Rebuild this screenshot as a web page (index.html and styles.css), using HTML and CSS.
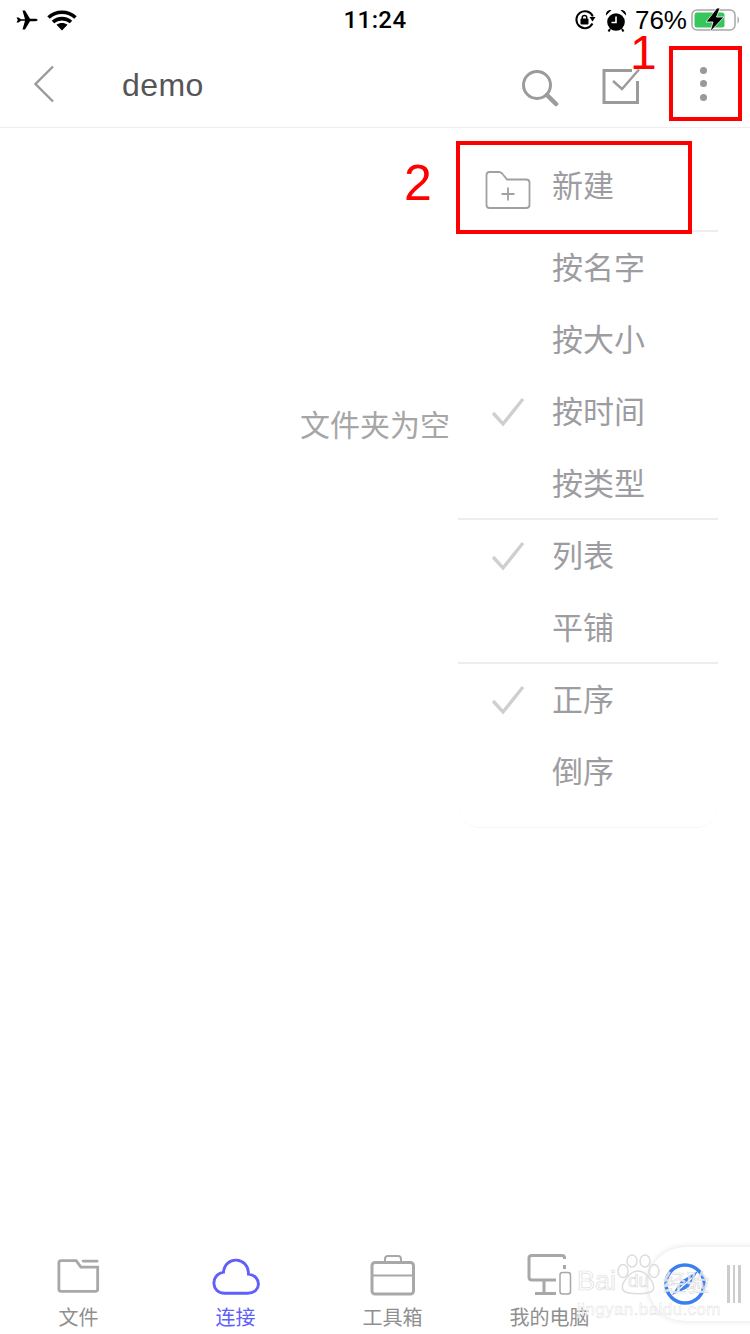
FILE: index.html
```html
<!DOCTYPE html>
<html lang="zh-CN">
	<head>
		<meta charset="UTF-8">
		<title>demo</title>
		<link rel="stylesheet" href="styles.css">
	</head>
	<body>
		<div class="page">
			<div class="status">
				<div class="status-left">
					<svg width="22" height="20" viewBox="0 0 22 20"><path d="M0.500 7.500 2.500 7.500 5 9.200 9 9.200 6.500 0.500 9 0.500 14 8.800 19 8.800C22.500 8.800 22.500 11.200 19 11.200L14 11.200 9 19.500 6.500 19.500 9 10.800 5 10.800 2.500 12.500 0.500 12.500 1.800 10Z" fill="#000"/></svg>
					<svg width="30" height="21" viewBox="0 0 30 21"><path d="M1.500 7.500C9 0.500 21 0.500 28.500 7.500M6 12C11 7.500 19 7.500 24 12" fill="none" stroke="#000" stroke-width="3.600"/><path d="M9.500 14.800C12.500 12.300 17.500 12.300 20.500 14.800L15 20.500Z" fill="#000"/></svg>
				</div>
				<div class="status-time">11:24</div>
				<div class="status-right">
					<svg class="ic-lock" width="22" height="22" viewBox="0 0 22 22"><path d="M18.500 14.500A8.500 8.500 0 1 1 18.800 7.500" fill="none" stroke="#000" stroke-width="2"/><path d="M15.500 8 21.500 8 18.500 12.500Z" fill="#000"/><rect x="6.500" y="9.500" width="8" height="6" rx="1" fill="#000"/><path d="M8.300 10V8.300C8.300 5.800 12.700 5.800 12.700 8.300V10" fill="none" stroke="#000" stroke-width="1.500"/></svg>
					<svg class="ic-alarm" width="22" height="23" viewBox="0 0 22 23"><circle cx="11" cy="13" r="8.800" fill="#000"/><path d="M11 7.500V13.500H6.500" fill="none" stroke="#fff" stroke-width="1.600"/><path d="M1 6.500C0.500 3 3 0.500 6.500 1ZM21 6.500C21.500 3 19 0.500 15.500 1Z" fill="#000"/><path d="M5 20 3.500 22.500M17 20 18.500 22.500" stroke="#000" stroke-width="2"/></svg>
					<span class="status-pct">76%</span>
					<svg width="50" height="24" viewBox="0 0 50 24"><rect x="1" y="2" width="43" height="20" rx="5" fill="none" stroke="#a8a8a8" stroke-width="1.500"/><rect x="3.500" y="4.500" width="30" height="15" rx="2.500" fill="#36c75a"/><path d="M46.500 8.500C48.500 9 48.500 15 46.500 15.500Z" fill="#a8a8a8"/><path d="M26 0 15 14 22 14 19 24 33 9 25.500 9 29 0Z" fill="#000" stroke="#fff" stroke-width="0.800"/></svg>
				</div>
			</div>

			<div class="nav">
				<svg class="nav-back" width="22" height="38" viewBox="0 0 22 38"><path d="M20 1.500 2.500 19 20 36.500" fill="none" stroke="#999" stroke-width="2.400"/></svg>
				<div class="nav-title">demo</div>
				<svg class="nav-search" width="38" height="38" viewBox="0 0 38 38"><circle cx="16" cy="16" r="13.500" fill="none" stroke="#9b9b9b" stroke-width="3"/><path d="M26 26 35 35" stroke="#9b9b9b" stroke-width="4.500" stroke-linecap="round"/></svg>
				<svg class="nav-check" width="40" height="38" viewBox="0 0 40 38"><path d="M30 3.500H2V35.500H35.500V14" fill="none" stroke="#9b9b9b" stroke-width="3"/><path d="M11 14 20 22 37 2.500" fill="none" stroke="#9b9b9b" stroke-width="2.400"/></svg>
				<div class="nav-more"><i></i><i></i><i></i></div>
			</div>

			<div class="main">文件夹为空</div>

			<div class="tabs">
				<div class="tab">
					<svg class="tab-folder" width="43" height="36" viewBox="0 0 46 38"><path d="M2 28V5C2 3.500 3 2.500 4.500 2.500H20.500L25.500 9.500H43.500V33C43.500 34.500 42.500 35.500 41 35.500H4.500C3 35.500 2 34.500 2 33Z" fill="none" stroke="#a8a8a8" stroke-width="3"/><path d="M28 3H43" stroke="#a8a8a8" stroke-width="3" stroke-linecap="round"/></svg>
					<span>文件</span>
				</div>
				<div class="tab tab-on">
					<svg width="48" height="39" viewBox="0 0 50 40"><path d="M13 37.500H37C52 37.500 52 19 38 17.500C38 -1.500 13 -1.500 12 15.500C-2 18 -1 37.500 13 37.500Z" fill="none" stroke="#5f5ffb" stroke-width="3"/></svg>
					<span>连接</span>
				</div>
				<div class="tab">
					<svg width="46" height="42" viewBox="0 0 46 42"><rect x="2" y="8.500" width="41.500" height="31.500" rx="3" fill="none" stroke="#a8a8a8" stroke-width="3"/><path d="M2 21.500H43.500" stroke="#a8a8a8" stroke-width="2"/><path d="M15 8V5C15 3 16 2 18 2H28C30 2 31 3 31 5V8" fill="none" stroke="#a8a8a8" stroke-width="2"/></svg>
					<span>工具箱</span>
				</div>
				<div class="tab">
					<svg width="46" height="42" viewBox="0 0 46 42"><path d="M29 26H5C3 26 2 25 2 23V4C2 2 3 1.500 5 1.500H35C36.500 1.500 37.500 2.500 37.500 4V5" fill="none" stroke="#a8a8a8" stroke-width="3"/><path d="M17 27V39M8 39.500H29" stroke="#a8a8a8" stroke-width="3"/><rect x="33" y="18.500" width="10.500" height="21.500" rx="2.500" fill="none" stroke="#a8a8a8" stroke-width="1.500"/><path d="M37.500 11V15" stroke="#a8a8a8" stroke-width="3"/></svg>
					<span>我的电脑</span>
				</div>
			</div>

			<div class="menu">
				<div class="menu-group">
					<div class="menu-row menu-row-new">
						<svg class="menu-icon" width="46" height="40" viewBox="0 0 46 40"><path d="M1.500 5C1.500 3 2.500 2 4.500 2H14C16 2 17 3 18 4.500L22 9.500H41C43 9.500 44.500 10.500 44.500 12.500V35C44.500 37 43 38 41 38H4.500C2.500 38 1.500 37 1.500 35Z" fill="none" stroke="#a0a0a4" stroke-width="1.800"/><path d="M16.500 24H29.500M23 17.500V30.500" stroke="#a0a0a4" stroke-width="1.800"/></svg>
						<span>新建</span>
					</div>
				</div>
				<div class="menu-group">
					<div class="menu-row"><span>按名字</span></div>
					<div class="menu-row"><span>按大小</span></div>
					<div class="menu-row">
						<svg class="menu-tick" width="34" height="30" viewBox="0 0 34 30"><path d="M2 16 12 27 32 2" fill="none" stroke="#cfcfcf" stroke-width="3.400"/></svg>
						<span>按时间</span>
					</div>
					<div class="menu-row"><span>按类型</span></div>
				</div>
				<div class="menu-group">
					<div class="menu-row">
						<svg class="menu-tick" width="34" height="30" viewBox="0 0 34 30"><path d="M2 16 12 27 32 2" fill="none" stroke="#cfcfcf" stroke-width="3.400"/></svg>
						<span>列表</span>
					</div>
					<div class="menu-row"><span>平铺</span></div>
				</div>
				<div class="menu-group">
					<div class="menu-row">
						<svg class="menu-tick" width="34" height="30" viewBox="0 0 34 30"><path d="M2 16 12 27 32 2" fill="none" stroke="#cfcfcf" stroke-width="3.400"/></svg>
						<span>正序</span>
					</div>
					<div class="menu-row"><span>倒序</span></div>
				</div>
			</div>

			<!-- annotations drawn on the screenshot -->
			<div class="mark mark-more"></div>
			<div class="mark mark-new"></div>
			<div class="mark-num mark-num-1">1</div>
			<div class="mark-num mark-num-2">2</div>

			<!-- floating pill + watermark -->
			<div class="pill">
				<svg width="44" height="44" viewBox="0 0 44 44"><circle cx="22" cy="22" r="19" fill="none" stroke="#3a7ff0" stroke-width="3.500"/><path d="M35 9 25 26 9 33 18 19Z" fill="#3a7ff0"/><path d="M14 29 29 16" stroke="#fff" stroke-width="1.200"/></svg>
				<div class="pill-bars"><i></i><i></i><i></i></div>
			</div>
			<div class="wm">
				<div class="wm-big">
					<span>Bai</span>
					<span class="wm-paw">
						<svg width="46" height="42" viewBox="0 0 46 42"><ellipse cx="8" cy="17" rx="5" ry="6.500" fill="none" stroke="#ddd" stroke-width="1.500"/><ellipse cx="17" cy="7" rx="5" ry="6" fill="none" stroke="#ddd" stroke-width="1.500"/><ellipse cx="30" cy="7" rx="5" ry="6" fill="none" stroke="#ddd" stroke-width="1.500"/><ellipse cx="39" cy="17" rx="5" ry="6.500" fill="none" stroke="#ddd" stroke-width="1.500"/><path d="M23 17C14 17 5 31 8 36C11 41 35 41 38 36C41 31 32 17 23 17Z" fill="none" stroke="#ddd" stroke-width="1.500"/></svg>
						<span class="wm-du">du</span>
					</span>
					<span class="wm-cn">经验</span>
				</div>
				<div class="wm-small">jingyan.baidu.com</div>
			</div>
		</div>
	</body>
</html>
```

FILE: styles.css
```css
* {
	box-sizing: border-box;
}

body {
	margin: 0;
	background-color: #fff;
	font-family: "Liberation Sans", "Noto Sans CJK SC", sans-serif;
}

.page {
	position: relative;
	display: flex;
	flex-direction: column;
	width: 750px;
	height: 1334px;
	overflow: hidden;
}

/* status bar */
.status {
	display: flex;
	align-items: center;
	justify-content: space-between;
	height: 40px;
	padding: 0 9px;
	color: #000;
}

.status-left,
.status-right {
	display: flex;
	align-items: center;
	width: 287px;
}

.status-left {
	gap: 9px;
	padding-left: 7px;
}

.status-right {
	justify-content: flex-end;
}

.status-time {
	font-family: Roboto, sans-serif;
	font-size: 24px;
	font-weight: 500;
	letter-spacing: 0.4px;
}

.ic-alarm {
	margin-left: 9px;
}

.status-pct {
	margin: 0 4px 0 8px;
	font-size: 26px;
	line-height: 26px;
}

/* top nav */
.nav {
	display: flex;
	align-items: center;
	height: 88px;
	padding: 0 0 0 33px;
	border-bottom: 1px solid #eee;
}

.nav-title {
	flex: 1;
	margin-top: 4px;
	margin-left: 67px;
	font-size: 32px;
	letter-spacing: 0.4px;
	color: #555;
}

.nav-search {
	margin-top: 8px;
}

.nav-check {
	margin-left: 43px;
	margin-top: 5px;
}

.nav-more {
	display: flex;
	flex-direction: column;
	align-items: center;
	gap: 6.500px;
	width: 7px;
	margin: 0 43px 0 58px;
}

.nav-more i {
	width: 7px;
	height: 7px;
	border-radius: 50%;
	background-color: #999;
}

/* empty folder */
.main {
	flex: 1;
	padding-top: 273px;
	font-family: "Noto Sans CJK SC", sans-serif;
	font-size: 30px;
	line-height: 44px;
	text-align: center;
	color: #a6a6a6;
}

/* bottom tabs */
.tabs {
	display: flex;
	height: 94px;
}

.tab {
	display: flex;
	flex-direction: column;
	align-items: center;
	justify-content: flex-end;
	width: 157px;
	font-family: "Noto Sans CJK SC", sans-serif;
	font-size: 20px;
	line-height: 28px;
	color: #8f8f8f;
}

.tab svg {
	margin-bottom: 7px;
}

.tab .tab-folder {
	margin-bottom: 9px;
}

.tab span {
	margin-bottom: 3px;
}

.tab-on {
	color: #5f5ffb;
}

/* popup menu */
.menu {
	position: absolute;
	top: 142px;
	left: 458px;
	width: 260px;
	height: 686px;
	border-radius: 0 0 22px 22px;
	border-bottom: 1px solid #f6f6f6;
	background-color: #fff;
	font-family: "Noto Sans CJK SC", sans-serif;
	font-size: 31px;
	color: #9d9da1;
}

.menu-group {
	border-bottom: 2px solid #eee;
}

.menu-group:last-child {
	border-bottom: 0;
}

.menu-row {
	position: relative;
	display: flex;
	align-items: center;
	height: 72px;
	padding-left: 94px;
	padding-bottom: 4px;
	line-height: 68px;
}

.menu-group:nth-child(n+2) .menu-row:last-child {
	height: 70px;
	padding-bottom: 2px;
}

.menu-group:last-child .menu-row:last-child {
	height: 72px;
	padding-bottom: 4px;
}

.menu-row-new {
	height: 88px;
}

.menu-icon {
	position: absolute;
	left: 27px;
	top: 28px;
}

.menu-tick {
	position: absolute;
	left: 33px;
	top: 21px;
}

/* red marks */
.mark {
	position: absolute;
	border: 4px solid #f00;
}

.mark-more {
	top: 46px;
	left: 669px;
	width: 73px;
	height: 75px;
}

.mark-new {
	top: 141px;
	left: 456px;
	width: 236px;
	height: 93px;
}

.mark-num {
	position: absolute;
	color: #f00;
}

.mark-num-1 {
	top: 35px;
	left: 630px;
	font-size: 48px;
	line-height: 36px;
}

.mark-num-2 {
	top: 158px;
	left: 404px;
	font-size: 50px;
	line-height: 1;
}

/* floating pill */
.pill {
	position: absolute;
	top: 1247px;
	right: -30px;
	display: flex;
	align-items: center;
	gap: 20px;
	width: 132px;
	height: 74px;
	padding-left: 15px;
	border-radius: 37px 0 0 37px;
	background-color: #fff;
	box-shadow: 0 0 6px rgba(0, 0, 0, 0.12);
}

.pill-bars {
	display: flex;
	gap: 3px;
}

.pill-bars i {
	width: 2.500px;
	height: 38px;
	background-color: #ccc;
}

/* baidu watermark */
.wm {
	position: absolute;
	top: 1252px;
	left: 577px;
	width: 134px;
	color: rgba(255, 255, 255, 0.75);
	-webkit-text-stroke: 0.7px #dcdcdc;
}

.wm-big {
	display: flex;
	align-items: flex-end;
	height: 44px;
	font-size: 27px;
	line-height: 30px;
	white-space: nowrap;
}

.wm-paw {
	position: relative;
	display: block;
	width: 46px;
	height: 42px;
	margin-left: -1px;
	font-size: 19px;
}

.wm-paw svg {
	display: block;
}

.wm-du {
	position: absolute;
	left: 13px;
	bottom: 0;
}

.wm-cn {
	margin-left: 2px;
	font-family: "Noto Sans CJK SC", sans-serif;
	font-size: 23px;
}

.wm-small {
	margin-top: 4px;
	font-size: 17px;
	line-height: 20px;
	letter-spacing: 0.4px;
	-webkit-text-stroke: 0.4px #dcdcdc;
	white-space: nowrap;
}
```
